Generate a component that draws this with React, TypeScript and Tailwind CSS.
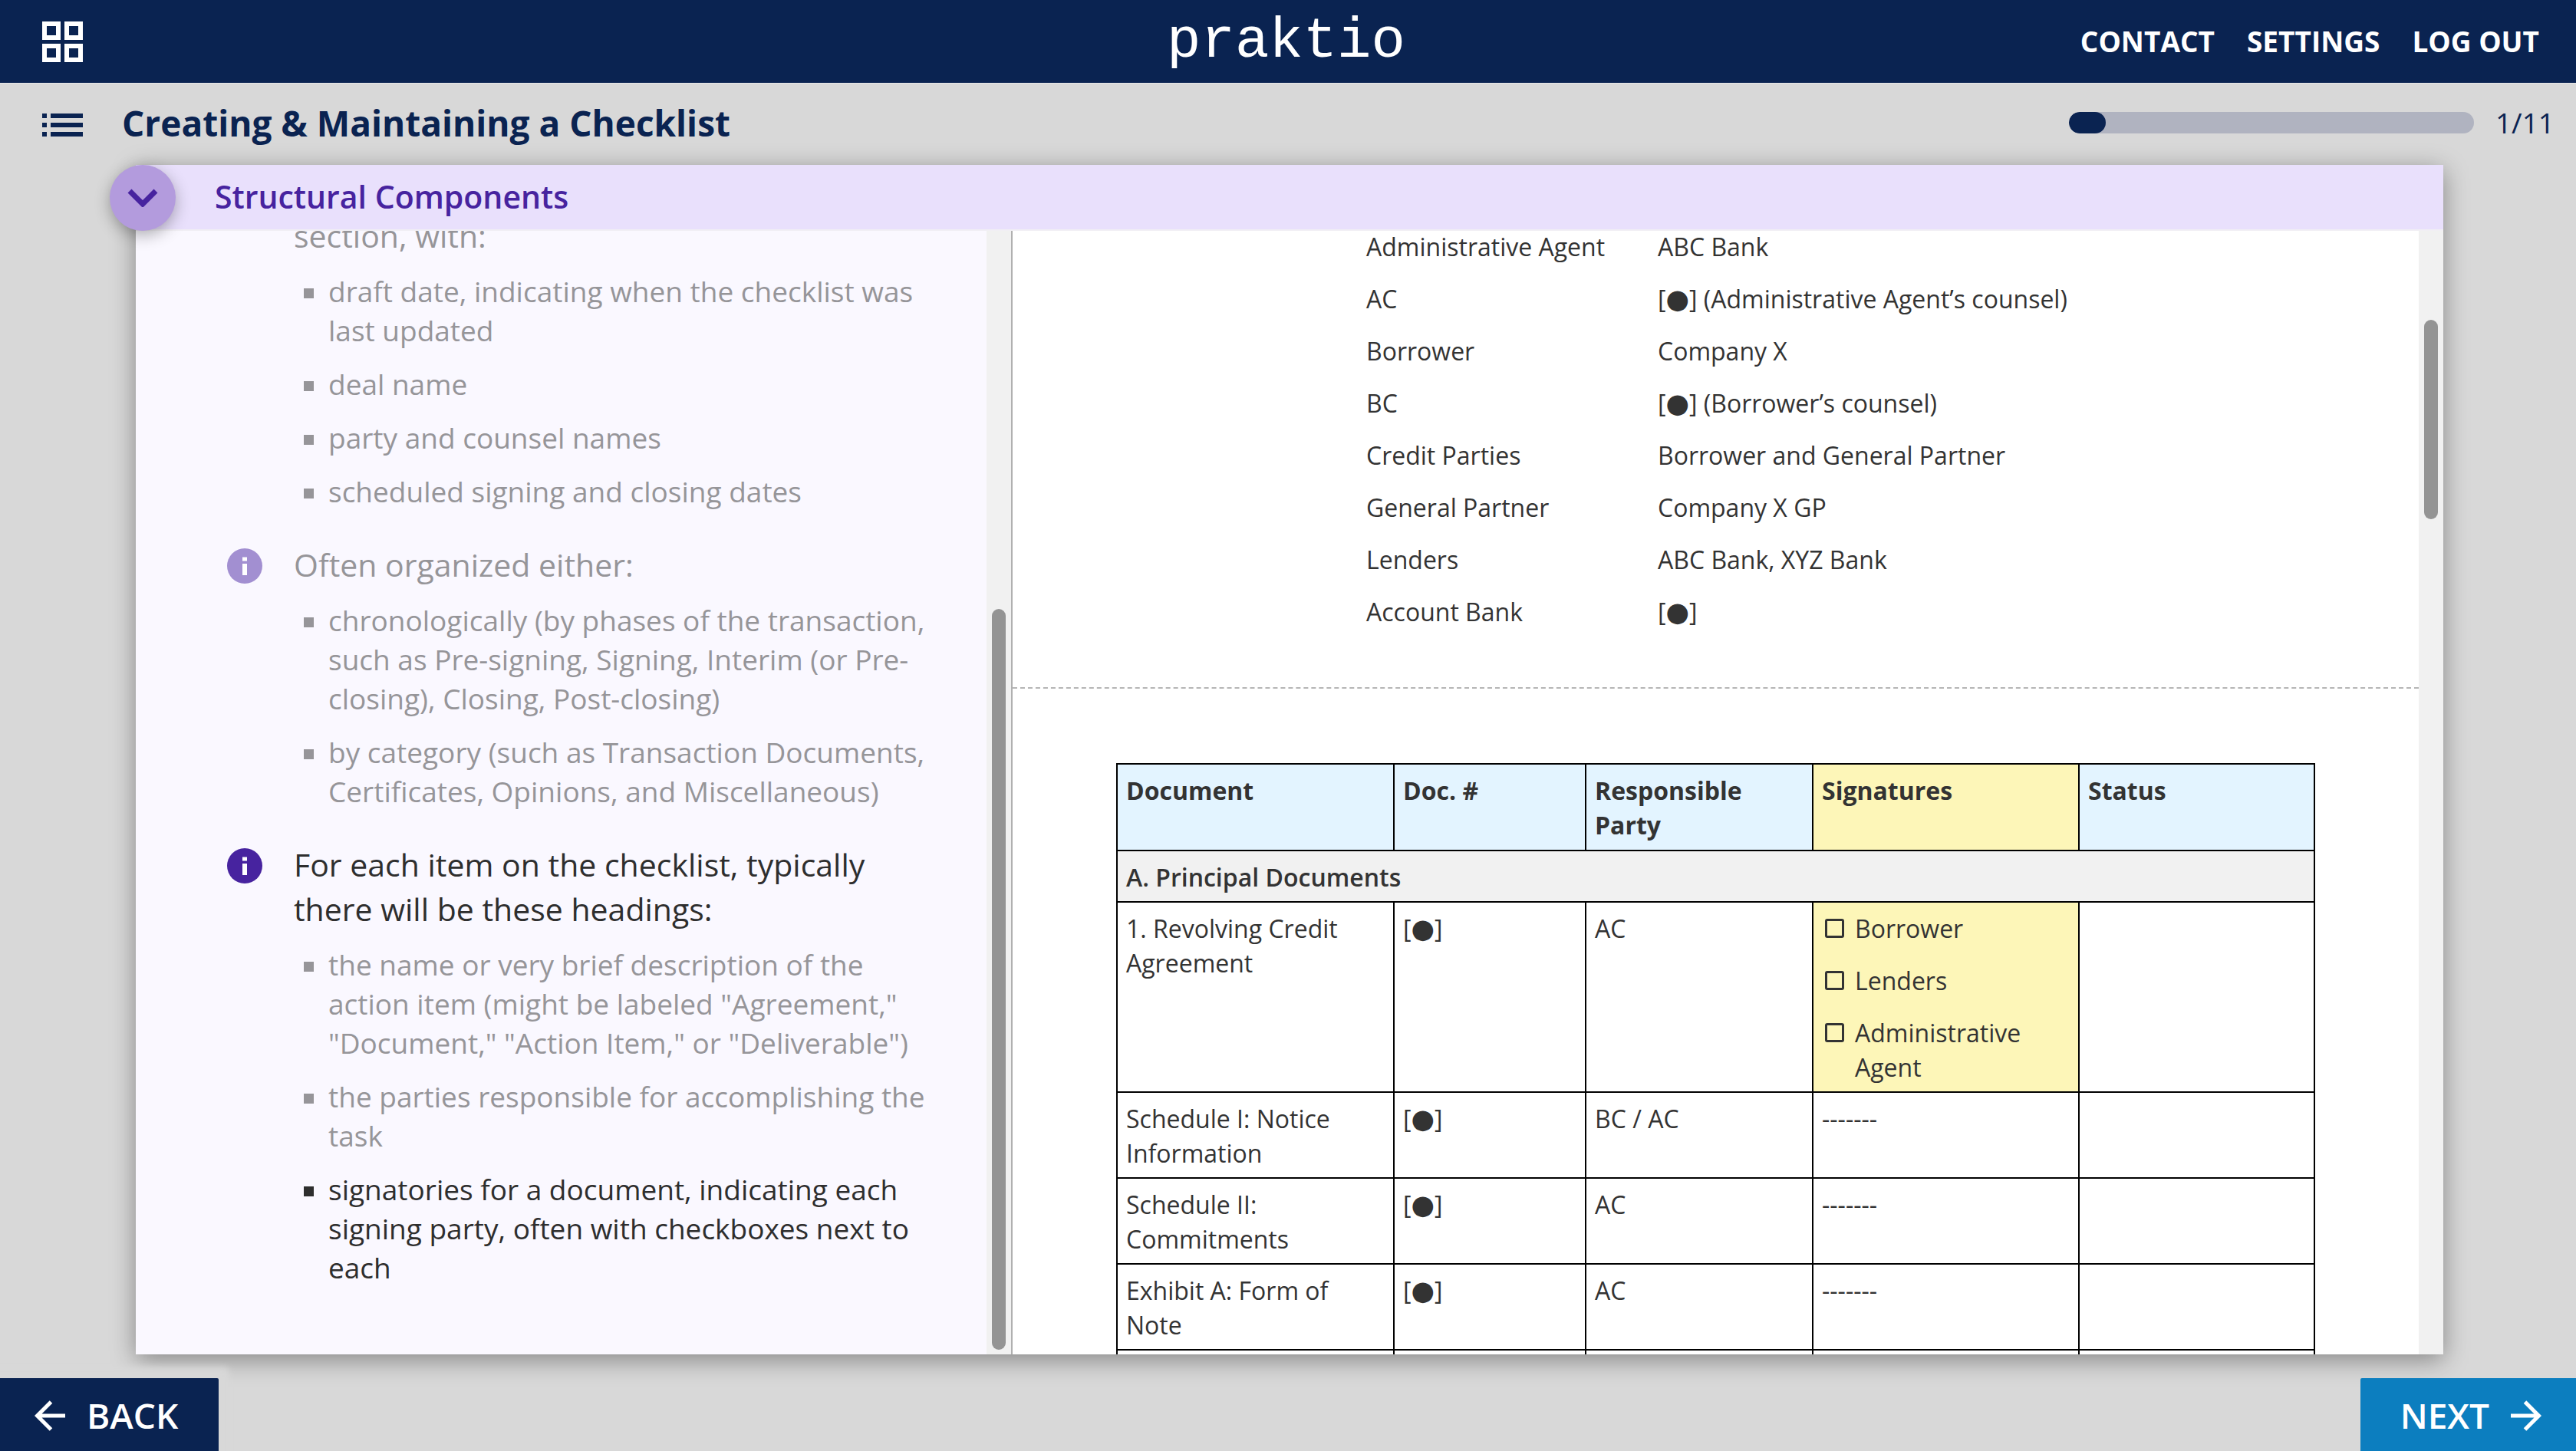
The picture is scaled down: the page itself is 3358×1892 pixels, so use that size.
import type { ReactNode } from "react";

type Note = {
  heading: string;
  active?: boolean;
  icon?: boolean;
  items: { text: string; active?: boolean }[];
};

const notes: Note[] = [
  {
    heading: "section, with:",
    items: [
      { text: "draft date, indicating when the checklist was last updated" },
      { text: "deal name" },
      { text: "party and counsel names" },
      { text: "scheduled signing and closing dates" },
    ],
  },
  {
    heading: "Often organized either:",
    icon: true,
    items: [
      {
        text: "chronologically (by phases of the transaction, such as Pre-signing, Signing, Interim (or Pre-closing), Closing, Post-closing)",
      },
      { text: "by category (such as Transaction Documents, Certificates, Opinions, and Miscellaneous)" },
    ],
  },
  {
    heading: "For each item on the checklist, typically there will be these headings:",
    icon: true,
    active: true,
    items: [
      {
        text: 'the name or very brief description of the action item (might be labeled "Agreement," "Document," "Action Item," or "Deliverable")',
      },
      { text: "the parties responsible for accomplishing the task" },
      {
        text: "signatories for a document, indicating each signing party, often with checkboxes next to each",
        active: true,
      },
    ],
  },
];

function Blank() {
  return (
    <>
      [<span className="font-['DejaVu_Sans',sans-serif] text-[35px] leading-none">●</span>]
    </>
  );
}

const parties: [string, ReactNode][] = [
  ["Administrative Agent", "ABC Bank"],
  ["AC", <><Blank /> (Administrative Agent’s counsel)</>],
  ["Borrower", "Company X"],
  ["BC", <><Blank /> (Borrower’s counsel)</>],
  ["Credit Parties", "Borrower and General Partner"],
  ["General Partner", "Company X GP"],
  ["Lenders", "ABC Bank, XYZ Bank"],
  ["Account Bank", <Blank />],
];

const documents: { name: string; party: string; signers?: string[] }[] = [
  { name: "1. Revolving Credit Agreement", party: "AC", signers: ["Borrower", "Lenders", "Administrative Agent"] },
  { name: "Schedule I: Notice Information", party: "BC / AC" },
  { name: "Schedule II: Commitments", party: "AC" },
  { name: "Exhibit A: Form of Note", party: "AC" },
];

function GridIcon() {
  return (
    <svg className="h-[53px] w-[53px]" viewBox="0 0 53 53" fill="none" stroke="currentColor" strokeWidth="6" aria-hidden="true">
      <rect x="3" y="3" width="18" height="18" />
      <rect x="32" y="3" width="18" height="18" />
      <rect x="3" y="32" width="18" height="18" />
      <rect x="32" y="32" width="18" height="18" />
    </svg>
  );
}

function ListIcon() {
  return (
    <svg className="h-[30px] w-[53px]" viewBox="0 0 53 30" fill="currentColor" aria-hidden="true">
      <path d="M0 0h6v6H0zM11 0h42v6H11zM0 12h6v6H0zM11 12h42v6H11zM0 24h6v6H0zM11 24h42v6H11z" />
    </svg>
  );
}

function InfoIcon({ active }: { active?: boolean }) {
  return (
    <svg
      className={active ? "mt-2 size-[46px] shrink-0 text-[#47239f]" : "mt-2 size-[46px] shrink-0 text-[#a28fd1]"}
      viewBox="0 0 46 46"
      aria-hidden="true"
    >
      <circle cx="23" cy="23" r="23" fill="currentColor" />
      <path d="M20 11.500h6v5h-6zM20 20h6v15h-6z" fill="#fff" />
    </svg>
  );
}

function Arrow({ left }: { left?: boolean }) {
  return (
    <svg className="h-[40px] w-[40px]" viewBox="0 0 40 40" fill="none" stroke="currentColor" strokeWidth="5" aria-hidden="true">
      <path d={left ? "M40 20H4M21.500 2L3.500 20l18 18" : "M0 20h36M18.500 2l18 18-18 18"} />
    </svg>
  );
}

const cell = "border-2 border-black pr-[10px] pl-[11px] pt-[11px] pb-[9px]";
const headCell = "border-2 border-black pr-[10px] pl-[11px] pt-[11px] pb-[10px] font-bold";

export default function App() {
  return (
    <div className="flex h-screen flex-col bg-[#d8d8d8] font-['Open_Sans',sans-serif] text-[#333]">
      <header className="grid h-[109px] shrink-0 grid-cols-[1fr_auto_1fr] items-center border-b border-[#e6e6e6] bg-[#0a2351] pr-12 pl-[55px] text-white">
        <button type="button" aria-label="Dashboard" className="justify-self-start">
          <GridIcon />
        </button>
        <a href="#" className="pr-3 font-['Liberation_Mono',monospace] text-[74px] leading-none">
          praktio
        </a>
        <nav className="flex gap-[42px] justify-self-end text-[37px] font-bold">
          <a href="#">CONTACT</a>
          <a href="#">SETTINGS</a>
          <a href="#">LOG OUT</a>
        </nav>
      </header>

      <div className="flex h-[106px] shrink-0 items-center pr-[28px] pb-1 pl-[55px] text-[#0a2351]">
        <button type="button" aria-label="Contents" className="pt-[6px]">
          <ListIcon />
        </button>
        <h1 className="ml-[51px] text-[46px] font-bold">Creating &amp; Maintaining a Checklist</h1>
        <div
          role="progressbar"
          aria-label="Progress"
          aria-valuenow={1}
          aria-valuemin={0}
          aria-valuemax={11}
          className="ml-auto h-7 w-[528px] overflow-hidden rounded-[14px] bg-[#b0b3c0]"
        >
          <div className="h-full w-1/11 rounded-[14px] bg-[#0a2351]" />
        </div>
        <span className="ml-7 text-[37px]">1/11</span>
      </div>

      <main className="mr-[173px] ml-[177px] flex min-h-0 grow flex-col shadow-[0_7px_30px_rgba(0,0,0,0.38)]">
        <div className="relative flex h-[86px] shrink-0 items-center border-b-2 border-[#f1eff4] bg-[#e9e0fc] pl-[103px]">
          <button
            type="button"
            aria-label="Collapse section"
            className="absolute top-0 -left-[34px] flex size-[86px] items-center justify-center rounded-full bg-[#b39bdd] text-[#47239f] shadow-[0_6px_20px_rgba(0,0,0,0.3)]"
          >
            <svg className="h-[24px] w-[40px]" viewBox="0 0 40 24" fill="none" stroke="currentColor" strokeWidth="7" aria-hidden="true">
              <path d="M3 3l17 17L37 3" />
            </svg>
          </button>
          <h2 className="text-[41px] font-semibold text-[#47239f]">Structural Components</h2>
        </div>

        <div className="flex min-h-0 grow">
          <section aria-label="Notes" className="flex w-[1143px] shrink-0 border-r-2 border-[#b0b0b0] bg-[#faf8ff]">
            <div className="flex min-w-0 grow flex-col justify-end gap-[41px] overflow-hidden pr-[64px] pb-[88px] pl-[119px]">
              {notes.map((note) => (
                <div key={note.heading} className="flex gap-[41px]">
                  {note.icon ? <InfoIcon active={note.active} /> : <div className="w-[46px] shrink-0" />}
                  <div>
                    <h3 className={note.active ? "text-[41px] leading-[58px] text-[#2e2e2e]" : "text-[41px] leading-[58px] text-[#969599]"}>
                      {note.heading}
                    </h3>
                    <ul className="mt-[18px] flex flex-col gap-[19px] pl-[13px] text-[37px] leading-[51px]">
                      {note.items.map((item) => (
                        <li key={item.text} className={item.active ? "flex gap-[19px] text-[#2e2e2e]" : "flex gap-[19px] text-[#969599]"}>
                          <span className="mt-[22px] size-[13px] shrink-0 bg-current" />
                          <span>{item.text}</span>
                        </li>
                      ))}
                    </ul>
                  </div>
                </div>
              ))}
            </div>
            <div className="flex w-8 shrink-0 flex-col items-center bg-[#f1f1f1] pt-[493px] pb-[6px]">
              <div className="w-[18px] grow rounded-full bg-[#949494]" />
            </div>
          </section>

          <section aria-label="Sample checklist" className="flex min-w-0 grow bg-white text-[32px]">
            <div className="min-w-0 grow overflow-hidden">
              <dl className="flex flex-col gap-[26px] border-b-2 border-dashed border-[#b5b5b5] pb-[77px] pl-[461px] leading-[42px]">
                {parties.map(([term, value]) => (
                  <div key={term} className="grid grid-cols-[380px_1fr]">
                    <dt>{term}</dt>
                    <dd>{value}</dd>
                  </div>
                ))}
              </dl>
              <div className="px-[135px] pt-[97px]">
                <table className="w-full table-fixed border-collapse text-left align-top leading-[45px]">
                  <colgroup>
                    <col className="w-[361px]" />
                    <col className="w-[250px]" />
                    <col className="w-[296px]" />
                    <col className="w-[347px]" />
                    <col />
                  </colgroup>
                  <thead className="bg-[#e3f4ff] align-top">
                    <tr>
                      <th className={headCell}>Document</th>
                      <th className={headCell}>Doc. #</th>
                      <th className={headCell}>Responsible Party</th>
                      <th className={headCell + " bg-[#fdf6b8]"}>Signatures</th>
                      <th className={headCell}>Status</th>
                    </tr>
                  </thead>
                  <tbody className="align-top">
                    <tr className="bg-[#f1f1f1]">
                      <th colSpan={5} className={cell + " font-semibold"}>
                        A. Principal Documents
                      </th>
                    </tr>
                    {documents.map((doc) => (
                      <tr key={doc.name}>
                        <td className={cell}>{doc.name}</td>
                        <td className={cell}>
                          <Blank />
                        </td>
                        <td className={cell}>{doc.party}</td>
                        {doc.signers ? (
                          <td className={cell + " bg-[#fdf6b8]"}>
                            <div className="flex flex-col gap-[23px]">
                              {doc.signers.map((signer) => (
                                <label key={signer} className="flex gap-[14px] pl-1">
                                  <input
                                    type="checkbox"
                                    className="mt-[10px] size-[25px] shrink-0 appearance-none rounded-[3px] border-3 border-[#333]"
                                  />
                                  <span>{signer}</span>
                                </label>
                              ))}
                            </div>
                          </td>
                        ) : (
                          <td className={cell}>-------</td>
                        )}
                        <td className={cell} />
                      </tr>
                    ))}
                    <tr className="h-28">
                      <td className={cell} />
                      <td className={cell} />
                      <td className={cell} />
                      <td className={cell} />
                      <td className={cell} />
                    </tr>
                  </tbody>
                </table>
              </div>
            </div>
            <div className="flex w-8 shrink-0 flex-col items-center bg-[#f1f1f1] pt-[116px]">
              <div className="h-[260px] w-[18px] rounded-full bg-[#949494]" />
            </div>
          </section>
        </div>
      </main>

      <footer className="mt-[31px] flex h-[95px] shrink-0 justify-between text-[46px] font-semibold text-white">
        <button
          type="button"
          className="flex items-center gap-7 rounded-tr-[2px] bg-[#0a2351] pt-[2px] pr-[53px] pl-[45px] shadow-[0_0_8px_14px_#d8d8d8]"
        >
          <Arrow left />
          BACK
        </button>
        <button type="button" className="flex items-center gap-7 rounded-tl-[2px] bg-[#0c7ebf] pt-[2px] pr-[45px] pl-[52px]">
          NEXT
          <Arrow />
        </button>
      </footer>
    </div>
  );
}
